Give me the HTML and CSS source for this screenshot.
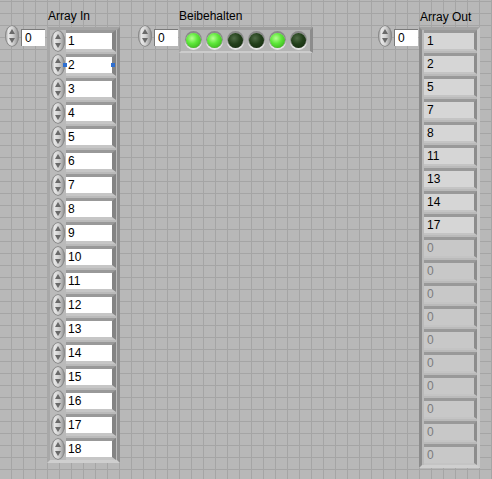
FILE: index.html
```html
<!DOCTYPE html>
<html>
<head>
    <meta charset="UTF-8">
    <title>Array filter</title>
    <link rel="stylesheet" href="styles.css">
</head>
<body>
<div id="panel">
    <!-- Array In -->
    <div class="index in-idx"><span class="spin"></span><span class="num">0</span></div>
    <div class="label in-label">Array In</div>
    <div class="arr arr-in">
        <div class="el"><span class="spin"></span><span class="cell">1</span></div>
        <div class="el"><span class="spin"></span><span class="cell sel">2</span></div>
        <div class="el"><span class="spin"></span><span class="cell">3</span></div>
        <div class="el"><span class="spin"></span><span class="cell">4</span></div>
        <div class="el"><span class="spin"></span><span class="cell">5</span></div>
        <div class="el"><span class="spin"></span><span class="cell">6</span></div>
        <div class="el"><span class="spin"></span><span class="cell">7</span></div>
        <div class="el"><span class="spin"></span><span class="cell">8</span></div>
        <div class="el"><span class="spin"></span><span class="cell">9</span></div>
        <div class="el"><span class="spin"></span><span class="cell">10</span></div>
        <div class="el"><span class="spin"></span><span class="cell">11</span></div>
        <div class="el"><span class="spin"></span><span class="cell">12</span></div>
        <div class="el"><span class="spin"></span><span class="cell">13</span></div>
        <div class="el"><span class="spin"></span><span class="cell">14</span></div>
        <div class="el"><span class="spin"></span><span class="cell">15</span></div>
        <div class="el"><span class="spin"></span><span class="cell">16</span></div>
        <div class="el"><span class="spin"></span><span class="cell">17</span></div>
        <div class="el"><span class="spin"></span><span class="cell">18</span></div>
    </div>

    <!-- Beibehalten -->
    <div class="index keep-idx"><span class="spin"></span><span class="num">0</span></div>
    <div class="label keep-label">Beibehalten</div>
    <div class="leds">
        <span class="led on"></span>
        <span class="led on"></span>
        <span class="led"></span>
        <span class="led"></span>
        <span class="led on"></span>
        <span class="led"></span>
    </div>

    <!-- Array Out -->
    <div class="index out-idx"><span class="spin"></span><span class="num">0</span></div>
    <div class="label out-label">Array Out</div>
    <div class="arr arr-out">
        <div class="el"><span class="cell">1</span></div>
        <div class="el"><span class="cell">2</span></div>
        <div class="el"><span class="cell">5</span></div>
        <div class="el"><span class="cell">7</span></div>
        <div class="el"><span class="cell">8</span></div>
        <div class="el"><span class="cell">11</span></div>
        <div class="el"><span class="cell">13</span></div>
        <div class="el"><span class="cell">14</span></div>
        <div class="el"><span class="cell">17</span></div>
        <div class="el off"><span class="cell">0</span></div>
        <div class="el off"><span class="cell">0</span></div>
        <div class="el off"><span class="cell">0</span></div>
        <div class="el off"><span class="cell">0</span></div>
        <div class="el off"><span class="cell">0</span></div>
        <div class="el off"><span class="cell">0</span></div>
        <div class="el off"><span class="cell">0</span></div>
        <div class="el off"><span class="cell">0</span></div>
        <div class="el off"><span class="cell">0</span></div>
        <div class="el off"><span class="cell">0</span></div>
    </div>
</div>
</body>
</html>
```

FILE: styles.css
```css
* {
    margin: 0;
    padding: 0;
    box-sizing: border-box;
}

body {
    font-family: "Liberation Sans", Arial, sans-serif;
    font-size: 12px;
    color: #000;
}

#panel {
    position: relative;
    width: 492px;
    height: 479px;
    overflow: hidden;
    background-color: #b8b8b8;
    background-image:
        linear-gradient(to right, #a5a5a5 1px, transparent 1px),
        linear-gradient(to bottom, #a5a5a5 1px, transparent 1px);
    background-size: 12px 12px;
    background-position: 11px 1px;
}

/* labels */
.label {
    position: absolute;
    line-height: 14px;
}
.in-label { left: 48px; top: 9px; }
.keep-label { left: 179px; top: 9px; }
.out-label { left: 420px; top: 10px; }

/* up/down spinner */
.spin {
    position: relative;
    display: block;
    flex: none;
    width: 14px;
    height: 22px;
    border-radius: 7px / 11px;
    background: linear-gradient(to right, #9a9a9a 0, #e6e6e6 25%, #d2d2d2 55%, #8c8c8c 100%);
    box-shadow: inset 0 0 0 1px #8a8a8a;
}
.spin::before,
.spin::after {
    content: "";
    position: absolute;
    left: 4px;
    border-left: 3px solid transparent;
    border-right: 3px solid transparent;
}
.spin::before {
    top: 4px;
    border-bottom: 5px solid #6a6a6a;
}
.spin::after {
    bottom: 4px;
    border-top: 5px solid #6a6a6a;
}

/* index controls */
.index {
    position: absolute;
    top: 25px;
    display: flex;
    align-items: flex-start;
    gap: 2px;
}
.in-idx { left: 5px; }
.keep-idx { left: 138px; }
.out-idx { left: 378px; }

.index .num {
    display: block;
    margin-top: 4px;
    width: 24px;
    height: 17px;
    padding-left: 3px;
    line-height: 16px;
    background: #fff;
    border-top: 1px solid #7a7a7a;
    border-left: 1px solid #7a7a7a;
}

/* arrays */
.arr {
    position: absolute;
    top: 27px;
    display: flex;
    flex-direction: column;
    background: #bababa;
    border-top: 3px solid #a4a4a4;
    border-left: 3px solid #a8a8a8;
    border-right: 3px solid #8e8e8e;
    border-bottom: 3px solid #cfcfcf;
}

.arr-in {
    left: 47px;
    width: 73px;
    height: 436px;
    padding: 0 0 0 1px;
    gap: 2px;
}

.arr-out {
    left: 419px;
    width: 61px;
    height: 441px;
    padding: 0 0 0 2px;
    border-left: 3px solid #8c8c8c;
    border-right: 3px solid #c8c8c8;
    gap: 2px;
}

.el {
    display: flex;
    align-items: flex-start;
    gap: 1px;
}
.arr-out .el { gap: 0; }

.cell {
    position: relative;
    display: block;
    height: 22px;
    padding-left: 2px;
    line-height: 16px;
    border-top: 3px solid #999;
    border-right: 4px solid #848484;
    border-bottom: 3px solid #c6c6c6;
}

.arr-in .cell {
    width: 50px;
    background: #fff;
}

.arr-out .el { height: 21px; }
.arr-out .cell {
    width: 53px;
    height: 21px;
    padding-left: 3px;
    background: #d6d6d6;
    border-right: 3px solid #8c8c8c;
    border-bottom: 2px solid #c4c4c4;
}
.arr-out .el.off .cell {
    color: #7c7c7c;
    background: #c8c8c8;
}

/* selection handles on element 2 */
.cell.sel::before,
.cell.sel::after {
    content: "";
    position: absolute;
    top: 6px;
    width: 4px;
    height: 4px;
    background: #2f6fd0;
}
.cell.sel::before { left: -3px; }
.cell.sel::after { right: -3px; }

/* boolean LEDs */
.leds {
    position: absolute;
    left: 179px;
    top: 27px;
    width: 134px;
    height: 26px;
    display: flex;
    align-items: center;
    gap: 6px;
    padding-left: 5px;
    background: #b4b4b4;
    border-top: 3px solid #a0a0a0;
    border-left: 2px solid #a8a8a8;
    border-right: 3px solid #8c8c8c;
    border-bottom: 2px solid #cccccc;
}

.led {
    display: block;
    width: 15px;
    height: 15px;
    border-radius: 50%;
    background: radial-gradient(circle at 40% 35%, #4f6b46 0, #23401b 45%, #10260b 100%);
    box-shadow: 0 -1px 0 1px #8a8a8a, 0 1px 0 1px #e4e4e4;
}
.led.on {
    background: radial-gradient(circle at 40% 35%, #b6ff92 0, #5ee83a 40%, #2f9e12 100%);
}
```
